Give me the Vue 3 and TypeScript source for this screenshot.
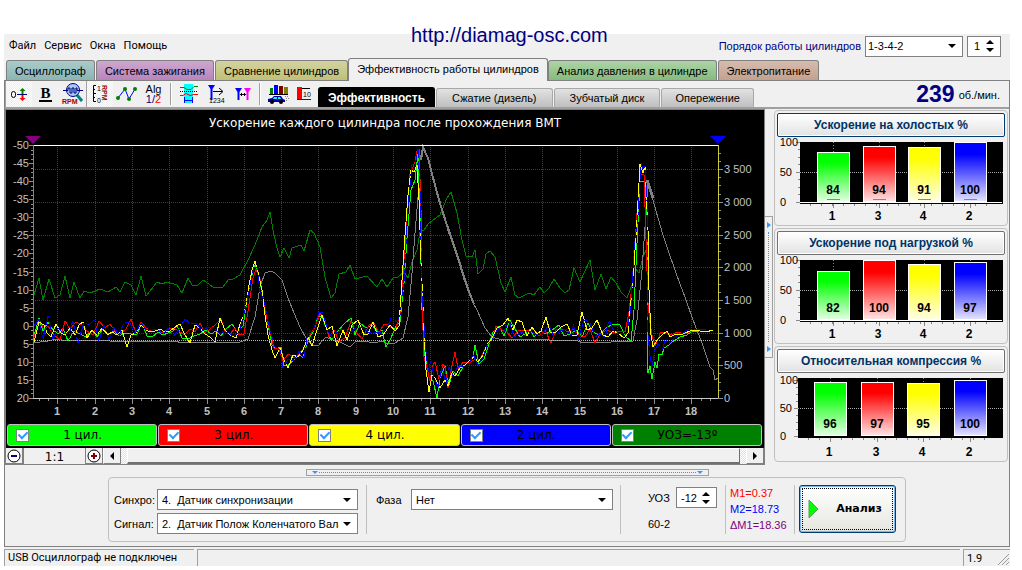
<script setup lang="ts">
import { ref } from 'vue'

interface Tab { label: string; tone: string }
interface Trace { name: string; color: string; width: number; dash?: string; points: string }
interface Legend { label: string; color: string }
interface Bar { cyl: string; value: number; color: string; x: number }
interface BarPanel { title: string; focus: boolean; left: number; top: number; height: number; labelY: number; bars: Bar[] }

const tabs: Tab[] = [
  { label: 'Осциллограф', tone: 'teal' },
  { label: 'Система зажигания', tone: 'violet' },
  { label: 'Сравнение цилиндров', tone: 'olive' },
  { label: 'Эффективность работы цилиндров', tone: 'plain' },
  { label: 'Анализ давления в цилиндре', tone: 'green' },
  { label: 'Электропитание', tone: 'brown' },
]
const activeTab = ref(3)
const subTabs = ['Эффективность', 'Сжатие (дизель)', 'Зубчатый диск', 'Опережение']
const activeSub = ref(0)

const order = ref('1-3-4-2')
const orderIndex = ref(1)
const sensors = [
  { id: 'sync', label: '4.\u00a0 Датчик синхронизации' },
  { id: 'crank', label: '2.\u00a0 Датчик Полож Коленчатого Вала' },
]
const sync = ref('sync')
const signal = ref('crank')
const phase = ref('Нет')
const advance = ref(-12)

const legend: Legend[] = [
  { label: '1 цил.', color: 'lime' },
  { label: '3 цил.', color: 'red' },
  { label: '4 цил.', color: 'yellow' },
  { label: '2 цил.', color: 'blue' },
  { label: 'УОЗ=-13º', color: 'dark' },
]
const shown = ref(legend.map(() => true))

/* Plot frame */
const L = 33, R = 718, T = 145, B = 398
const xAt = (n: number): number => Math.round(20 + n * 37.3)
const yLeft = (v: number): number => Math.round(T + ((v + 50) * (B - T)) / 70)
const yRight = (v: number): number => Math.round(B - v * 0.0654)
const xTicks = Array.from({ length: 18 }, (_, i) => i + 1)
const xMinor = Array.from({ length: 73 }, (_, i) => (i + 2) / 4).filter((n) => xAt(n) > L && xAt(n) < R)
const leftTicks = Array.from({ length: 15 }, (_, i) => -50 + i * 5)
const leftMinor = Array.from({ length: 56 }, (_, i) => -50 + i * 1.25)
const rightTicks = Array.from({ length: 8 }, (_, i) => i * 500)
const rightMinor = Array.from({ length: 31 }, (_, i) => i * 125)
const thousands = (v: number): string => (v >= 1000 ? `${Math.floor(v / 1000)} ${String(v % 1000).padStart(3, '0')}` : String(v))

const traces: Trace[] = [
  { name: 'advance', color: '#008000', width: 1, points: '34,295 39,278 43,300 49,279 55,298 60,295 65,276 70,298 74,282 80,298 84,291 90,293 100,289 108,292 116,287 120,292 125,282 131,285 136,295 141,276 146,296 157,282 162,284 167,282 177,285 182,293 188,278 192,285 198,285 203,280 213,287 223,287 228,280 233,279 240,275 248,260 255,245 262,227 267,220 270,212 273,230 277,248 280,257 284,248 289,258 292,248 301,245 304,251 310,230 314,233 320,247 325,277 331,298 335,293 339,274 346,272 350,265 355,279 367,276 377,287 382,279 387,287 393,278 398,277 404,272 408,278 412,262 417,250 420,232 424,230 428,224 440,215 447,198 451,192 457,213 462,240 466,256 472,257 475,250 478,274 483,269 486,254 490,251 495,257 501,283 505,292 511,277 515,295 519,298 529,293 534,295 540,287 544,293 549,288 554,279 560,288 565,293 569,290 574,268 580,282 590,260 595,290 601,274 606,289 611,277 616,283 621,292 627,298 632,285 634,267 639,273 643,257 647,248' },
  { name: 'rpm', color: '#808080', width: 1, points: '34,342 40,342 44,341 48,341 56,339 62,340 68,341 76,340 86,341 95,340 110,341 130,341 150,342 160,341 168,342 175,341 182,343 190,342 197,343 205,342 212,343 220,342 228,343 240,342 248,339 255,317 260,287 265,273 271,271 275,273 282,280 288,298 294,313 300,327 307,340 313,345 318,346 322,341 326,337 333,340 340,342 350,347 355,342 365,341 373,343 383,341 388,344 395,343 403,338 408,317 412,273 415,233 418,197 420,160 423,146 428,157 440,203 457,253 473,303 477,310 485,328 492,337 502,340 513,339 525,340 538,339 550,340 560,341 570,340 578,341 583,343 595,342 607,343 615,341 625,342 633,341 637,320 642,270 645,227 648,183' },
  { name: 'rpm-fall', color: '#808080', width: 2, points: '421,160 423,147 425,152 428,158 431,170 435,185 439,200 444,216 449,232 454,246 459,261 464,278 469,292 474,304' },
  { name: 'rpm-end', color: '#808080', width: 1, points: '648,182 653,200 658,218 663,235 669,253 675,270 680,284 685,297 693,320 702,343 706,355 710,367 713,370 715,380 718,378' },
  { name: 'rpm-start', color: '#808080', width: 3, points: '647,180 650,189 653,198' },
  { name: 'cyl1', color: '#00ff00', width: 1, points: '34,336 39,318 43,331 48,322 53,330 58,334 63,328 68,341 74,331 80,334 86,337 92,330 97,337 103,329 108,334 114,331 119,336 125,333 131,334 137,334 142,323 147,336 152,337 158,332 163,335 168,333 173,331 177,325 182,338 188,339 194,336 200,334 206,330 211,334 216,331 221,336 226,329 232,324 237,332 243,326 247,301 251,278 255,265 259,276 262,292 265,308 268,325 272,345 275,349 281,347 284,366 288,365 294,360 299,354 303,358 308,340 313,332 318,317 322,316 327,330 331,340 337,332 344,324 351,318 355,335 360,323 366,328 372,325 378,332 382,330 386,347 391,338 396,326 400,322 404,283 407,238 411,190 415,180 418,154 420,216 422,310 425,356 429,377 433,381 437,398 440,378 445,366 449,385 453,371 458,376 463,367 468,362 473,358 475,345 479,364 484,359 488,347 493,332 499,326 504,336 510,320 515,329 520,337 525,334 530,329 534,337 540,331 546,334 552,330 559,325 564,336 570,334 576,330 582,337 588,323 593,332 599,335 606,328 613,324 620,325 626,337 631,341 634,310 637,243 640,181 645,181 647,215 648,373 650,366 652,379 655,362 657,368 659,354 662,355 664,348 669,345 672,342 680,337 687,335 692,331 699,331' },
  { name: 'cyl3', color: '#ff0000', width: 1, points: '34,337 40,321 44,330 48,326 54,335 60,340 65,321 70,329 76,322 82,325 87,331 93,335 99,321 105,328 110,324 115,331 120,334 126,329 131,319 136,333 141,322 146,328 152,332 158,330 163,333 168,329 173,328 179,331 184,335 190,329 195,332 200,323 205,333 210,329 215,325 221,319 225,331 230,334 235,328 239,335 244,334 248,311 253,278 256,269 260,279 264,303 268,324 274,348 279,349 283,361 288,354 295,358 300,353 305,346 310,335 315,327 320,313 325,320 329,337 334,330 339,341 345,338 351,321 356,332 362,339 369,325 374,323 379,333 384,324 389,325 395,331 400,315 403,274 407,216 410,174 415,162 417,151 419,149 421,208 422,303 424,357 427,368 430,381 433,365 435,362 439,379 443,364 445,367 448,388 452,366 455,352 458,369 463,362 469,363 474,360 480,359 484,351 488,344 493,339 496,326 502,330 507,332 512,338 519,330 527,331 533,329 539,336 545,330 551,343 556,330 563,329 568,332 574,329 579,335 585,337 590,329 595,343 601,333 607,330 613,333 619,331 625,332 629,312 633,276 637,213 640,175 644,174 646,239 648,303 650,323 652,335 655,346 658,339 661,332 666,332 671,335 677,332 685,334 692,331' },
  { name: 'cyl4', color: '#ffff00', width: 1, points: '34,342 39,322 44,325 47,333 51,337 56,324 61,333 65,335 70,328 75,335 79,325 83,322 87,338 92,330 97,335 102,328 108,335 112,332 117,335 122,330 127,347 131,335 136,333 141,325 146,330 150,332 155,331 160,329 165,332 170,331 175,327 180,324 185,335 190,343 195,325 200,328 205,334 210,337 215,342 220,318 225,330 230,335 236,338 240,324 243,317 246,305 249,285 252,270 255,261 258,272 262,290 265,315 268,335 272,350 275,358 280,348 284,360 288,368 293,355 298,357 303,350 308,337 312,346 317,330 322,315 327,330 332,326 337,346 343,330 347,340 352,325 358,320 364,335 368,334 373,322 378,337 383,335 390,325 395,331 399,326 402,280 405,235 408,195 411,170 414,172 417,165 419,200 421,260 424,330 426,370 429,392 432,375 435,378 440,388 445,380 448,386 452,372 455,376 460,368 465,365 470,360 474,357 478,362 483,355 487,345 492,338 497,328 503,325 508,318 513,330 517,320 522,322 527,336 532,327 537,334 541,331 546,317 550,332 556,332 561,327 567,324 572,335 577,335 582,312 587,330 592,328 597,320 603,335 608,337 613,331 618,333 624,338 628,333 631,300 634,265 637,220 640,164 643,173 645,166 648,230 649,290 651,335 653,347 657,340 662,335 667,331 670,337 676,334 683,334 692,330 700,331 706,332 713,330' },
  { name: 'cyl2', color: '#0000ff', width: 1, dash: '12 3', points: '34,326 39,319 43,340 48,316 53,339 58,328 63,333 69,334 73,320 78,343 84,322 89,325 94,320 99,341 104,325 109,340 114,327 119,336 124,322 130,323 135,334 141,323 146,330 152,329 158,330 163,335 168,328 174,336 180,328 185,319 191,324 196,323 202,331 208,327 214,328 220,334 226,331 233,336 239,333 242,321 246,306 250,285 254,267 257,267 260,292 264,300 267,316 270,330 275,347 280,350 283,368 288,359 294,361 299,351 304,358 308,332 313,331 319,312 323,313 328,332 333,338 338,329 345,330 351,332 357,327 363,328 368,332 374,333 381,332 387,329 391,318 397,322 400,315 404,282 408,206 412,164 415,166 418,149 420,188 422,291 425,342 428,371 431,361 434,378 438,387 442,367 446,384 449,367 453,375 458,367 464,366 469,365 473,354 478,365 483,357 487,345 492,340 498,328 504,332 509,320 514,337 520,333 526,331 532,332 537,335 543,333 549,325 554,337 560,331 566,329 571,335 573,324 578,340 584,320 590,322 595,337 600,334 605,337 609,320 614,331 620,334 627,333 631,306 634,250 638,215 641,163 643,169 645,166 647,201 648,333 650,356 652,366 655,350 658,344 663,349 665,340 670,343 675,337 681,334 690,329 698,330 707,329' },
]

const makeBars = (values: number[], xs: number[]): Bar[] =>
  values.map((value, i) => ({ value, x: xs[i], cyl: ['1', '3', '4', '2'][i], color: ['lime', 'red', 'yellow', 'blue'][i] }))
const panels: BarPanel[] = [
  { title: 'Ускорение на холостых %', focus: true, left: 23, top: 5, height: 60, labelY: 83, bars: makeBars([84, 94, 91, 100], [40, 86, 131, 177]) },
  { title: 'Ускорение под нагрузкой %', focus: false, left: 23, top: 5, height: 60, labelY: 83, bars: makeBars([82, 100, 94, 97], [40, 86, 131, 177]) },
  { title: 'Относительная компрессия %', focus: false, left: 21, top: 7, height: 56, labelY: 83, bars: makeBars([96, 97, 95, 100], [37, 84, 130, 177]) },
]
const gradients = [
  { id: 'lime', from: '#00ff00', to: '#e4ffe4' },
  { id: 'red', from: '#ff0000', to: '#ffe4e4' },
  { id: 'yellow', from: '#ffff00', to: '#ffffe4' },
  { id: 'blue', from: '#0000ff', to: '#e4e4ff' },
]
</script>

<template>
  <div class="app">
    <a class="site" href="http://diamag-osc.com">http://diamag-osc.com</a>

    <header class="header">
      <nav class="menu">
        <button type="button">Файл</button>
        <button type="button">Сервис</button>
        <button type="button">Окна</button>
        <button type="button">Помощь</button>
      </nav>
      <div class="order">
        <label class="order-label" for="order">Порядок работы цилиндров</label>
        <div class="drop order-drop">
          <select id="order" v-model="order"><option>1-3-4-2</option><option>1-2-4-3</option></select>
          <svg width="8" height="4" viewBox="0 0 8 4"><path d="M0 0h8L4 4z" /></svg>
        </div>
        <div class="spin">
          <input v-model="orderIndex" type="text" inputmode="numeric" aria-label="Номер цилиндра">
          <div class="spin-keys">
            <button type="button" aria-label="Больше" @click="orderIndex++"><svg width="8" height="4" viewBox="0 0 8 4"><path d="M0 4h8L4 0z" /></svg></button>
            <button type="button" aria-label="Меньше" @click="orderIndex--"><svg width="8" height="4" viewBox="0 0 8 4"><path d="M0 0h8L4 4z" /></svg></button>
          </div>
        </div>
      </div>
    </header>

    <nav class="tabs">
      <button v-for="(tab, i) in tabs" :key="tab.label" type="button" class="tab" :class="[tab.tone, { active: i === activeTab }]" @click="activeTab = i">{{ tab.label }}</button>
    </nav>

    <main class="frame">
      <div class="toolbar">
        <div class="tools">
          <button type="button" class="tool pressed" aria-label="Смещение нуля">
            <svg viewBox="0 0 24 24"><rect x="4.500" y="9.500" width="4" height="6" rx="2" fill="none" stroke="#000" /><path d="M10 12.500h10" stroke="#000080" /><path d="M15.500 6l3 3h-2v3h-2V9h-2z" fill="#008000" /><path d="M15.500 19l3-3h-2v-3h-2v3h-2z" fill="#f00" /></svg>
          </button>
          <button type="button" class="tool" aria-label="Жирная линия">
            <span class="bold-b">B</span>
          </button>
          <button type="button" class="tool" aria-label="Обороты">
            <svg viewBox="0 0 24 24"><path d="M16 13l5 6" stroke="#008080" stroke-width="3" /><circle cx="12" cy="8" r="6.500" fill="#a6caf0" stroke="#000080" /><path d="M2 8.500h5V6h2v5h2V6h2v5h2V6h1v2.500h6" fill="none" stroke="#000080" /><text x="1" y="22" class="rpm-mark">RPM</text></svg>
          </button>
          <button type="button" class="tool pressed" aria-label="Шкала оборотов">
            <svg viewBox="0 0 24 24"><path d="M8 3.500H5.500v16H8M5 11.500h3M5 7.500h2M5 15.500h2" fill="none" stroke="#000" /><text x="9" y="9" class="tiny">1</text><text x="9" y="21" class="tiny">0</text><text transform="translate(14 3) rotate(90)" class="rpm-mark">RPM</text></svg>
          </button>
          <button type="button" class="tool" aria-label="График">
            <svg viewBox="0 0 24 24"><path d="M3 16L10 7l4 10 6-10" fill="none" stroke="#00f" /><g fill="#008000"><circle cx="3" cy="16" r="2" /><circle cx="10" cy="7" r="2" /><circle cx="14" cy="17" r="2" /><circle cx="20" cy="7" r="2" /></g></svg>
          </button>
          <button type="button" class="tool" aria-label="Алгоритм 1/2">
            <span class="alg">Alg<br><i>1/</i><em>2</em></span>
          </button>
          <span class="sep"></span>
          <button type="button" class="tool" aria-label="Фаза сигнала">
            <svg viewBox="0 0 24 24"><path d="M7 2h9v19H7z" fill="#0ff" /><path d="M3 5.500h4l3 2h4l3-3h4" fill="none" stroke="#008000" /><path d="M3 13.500h3l3-2 4 2 4-1h4" fill="none" stroke="#f00" /><path d="M3 9.500h18" stroke="#000" stroke-dasharray="1 1" /><path d="M7.500 15v6m8-6v6M8 18.500h7" stroke="#00f" fill="none" /></svg>
          </button>
          <button type="button" class="tool" aria-label="Нумерация меток">
            <svg viewBox="0 0 24 24"><path d="M4 3h7L8.500 7v11h-2V7z" fill="#00f" /><path d="M9 9.500h9" stroke="#000" /><path d="M15 6l4 3.500-4 3.500" fill="none" stroke="#000" /><text x="5" y="21" class="tiny">1234</text></svg>
          </button>
          <button type="button" class="tool" aria-label="Интервал меток">
            <svg viewBox="0 0 24 24"><path d="M4 6h7L8.500 10v8h-2v-8z" fill="#00f" /><path d="M13 6h7l-2.500 4v8h-2v-8z" fill="#f0f" /><path d="M9 12.500h6M10.500 11v3m3-3v3" stroke="#000" /></svg>
          </button>
          <span class="sep"></span>
          <button type="button" class="tool" aria-label="Тест автомобиля">
            <svg viewBox="0 0 24 24"><path d="M4 6h3v6H4z" fill="#008000" /><path d="M8 3h4v9H8z" fill="#00f" /><path d="M13 4h4v8h-4z" fill="#800000" /><path d="M18 5h4v7h-4z" fill="#808000" /><path d="M3 12.500h19" stroke="#000" /><path d="M2 17l4-1 2-2h7l2 3 2 1v2H2z" fill="#00a" /><path d="M8 15h3v2H7zM12 15h2l1 2h-3z" fill="#0ff" /><circle cx="6" cy="20" r="2" /><circle cx="15" cy="20" r="2" /><path d="M19 14.500h3m-2 2h3m-3 2h2" stroke="#888" stroke-dasharray="1 1" /></svg>
          </button>
          <button type="button" class="tool" aria-label="Уровень 10">
            <svg viewBox="0 0 24 24"><path d="M4 5h5v12H4z" fill="#f00" /><path d="M9 6.500h8" stroke="#000" /><path d="M4 17.500h14" stroke="#800000" /><text x="10" y="15" class="tiny">10</text></svg>
          </button>
        </div>
        <nav class="subtabs">
          <button v-for="(name, i) in subTabs" :key="name" type="button" class="subtab" :class="{ active: i === activeSub }" @click="activeSub = i">{{ name }}</button>
        </nav>
        <p class="rpm"><strong>239</strong> <span>об./мин.</span></p>
      </div>

      <div class="work">
        <section class="scope">
          <svg class="plot" viewBox="6 110 758 313">
            <text x="385" y="127" class="plot-title">Ускорение каждого цилиндра после прохождения ВМТ</text>
            <g shape-rendering="crispEdges" fill="none">
              <g stroke="#44440c" stroke-dasharray="1 1">
                <path v-for="n in xTicks" :key="'gx' + n" :d="`M${xAt(n)}.5 ${T}V${B}`" />
                <path v-for="v in rightTicks.slice(1)" :key="'gy' + v" :d="`M${L} ${yRight(v)}.5H${R}`" />
              </g>
              <g stroke="#909090">
                <path v-for="n in xMinor" :key="'mx' + n" :d="`M${xAt(n)}.5 ${B}v${Number.isInteger(n) ? 6 : 3}`" />
                <path v-for="v in leftTicks" :key="'tl' + v" :d="`M29 ${yLeft(v)}.5h4`" />
                <path v-for="v in leftMinor" :key="'ml' + v" :d="`M31 ${yLeft(v)}.5h2`" />
                <path v-for="v in rightTicks" :key="'tr' + v" :d="`M${R} ${yRight(v)}.5h5`" />
                <path v-for="v in rightMinor" :key="'mr' + v" :d="`M${R} ${yRight(v)}.5h3`" />
              </g>
              <polyline v-for="t in traces" :key="t.name" :points="t.points" :stroke="t.color" :stroke-width="t.width" :stroke-dasharray="t.dash" />
              <path :d="`M${L} 340.500H${R}`" stroke="#00ffff" stroke-dasharray="1 1" />
              <path :d="`M${L} ${T}.500H${R}`" stroke="#fff" />
              <path :d="`M${L} ${B}.500H${R}`" stroke="#c8c8c8" />
              <path :d="`M${L}.500 ${T}V${B}`" stroke="#3cb43c" />
              <path :d="`M${R}.500 ${T}V${B}`" stroke="#c8c83c" />
            </g>
            <path d="M25 136h16l-8 8z" fill="#800080" />
            <path d="M710 136h16l-8 8z" fill="#0000ff" />
            <g class="axis end"><text v-for="v in leftTicks" :key="v" x="29" :y="yLeft(v) + 4">{{ v }}</text></g>
            <g class="axis"><text v-for="v in rightTicks" :key="v" x="724" :y="yRight(v) + 4">{{ thousands(v) }}</text></g>
            <g class="axis strong"><text v-for="n in xTicks" :key="n" :x="xAt(n)" y="415">{{ n }}</text></g>
          </svg>

          <div class="legend">
            <label v-for="(item, i) in legend" :key="item.label" class="chip" :class="item.color">
              <input v-model="shown[i]" type="checkbox">
              <span>{{ item.label }}</span>
            </label>
          </div>

          <div class="zoombar">
            <button type="button" aria-label="Уменьшить"><svg width="14" height="14" viewBox="0 0 14 14"><circle cx="7" cy="7" r="6" fill="#fff" stroke="#000" /><path d="M4 7h6" stroke="#000080" stroke-width="2" /></svg></button>
            <output class="ratio">1:1</output>
            <button type="button" aria-label="Увеличить"><svg width="14" height="14" viewBox="0 0 14 14"><circle cx="7" cy="7" r="6" fill="#fff" stroke="#000" /><path d="M4 7h6M7 4v6" stroke="#800000" stroke-width="2" /></svg></button>
            <button type="button" class="arrow" aria-label="Влево"><svg width="4" height="8" viewBox="0 0 4 8"><path d="M4 0v8L0 4z" /></svg></button>
            <div class="track"><div class="thumb"></div></div>
            <button type="button" class="arrow" aria-label="Вправо"><svg width="4" height="8" viewBox="0 0 4 8"><path d="M0 0v8l4-4z" /></svg></button>
          </div>
        </section>

        <div class="vsplit">
          <svg width="4" height="6" viewBox="0 0 4 6"><path d="M0 0l4 3-4 3z" /></svg>
          <i></i>
          <svg width="4" height="6" viewBox="0 0 4 6"><path d="M0 0l4 3-4 3z" /></svg>
        </div>

        <aside class="side">
          <svg class="defs" width="0" height="0">
            <linearGradient v-for="g in gradients" :id="'fill-' + g.id" :key="g.id" x1="0" y1="0" x2="0" y2="1"><stop offset="0.200" :stop-color="g.from" /><stop offset="1" :stop-color="g.to" /></linearGradient>
          </svg>
          <section v-for="p in panels" :key="p.title" class="card">
            <button type="button" class="card-title" :class="{ focus: p.focus }">{{ p.title }}</button>
            <svg class="bars" viewBox="0 0 228 86">
              <g shape-rendering="crispEdges">
                <rect :x="p.left" y="5" :width="226 - p.left" :height="p.top + p.height - 3" fill="#000" />
                <path :d="`M${p.left} ${p.top + p.height / 2}.5H226`" stroke="#aaa" stroke-dasharray="1 1" />
                <path v-for="n in 9" :key="n" :d="`M${p.left - 2} ${p.top + (n - 1) * p.height / 8}h2`" stroke="#888" />
                <path v-for="n in 3" :key="'t' + n" :d="`M${p.left - 4} ${p.top + (n - 1) * p.height / 2}.5h4`" stroke="#888" />
                <path v-for="n in 17" :key="'b' + n" :d="`M${p.left - 1 + n * 11}.5 ${p.top + p.height + 2}v2`" stroke="#888" />
                <g v-for="b in p.bars" :key="b.cyl">
                  <path :d="`M${b.x + 16}.5 5V${p.top + p.height}`" stroke="#888" stroke-dasharray="1 2" />
                  <rect :x="b.x + 0.5" :y="p.top + Math.round(p.height * (1 - b.value / 100)) + 0.5" width="32" :height="Math.round(p.height * b.value / 100) - 1" :fill="`url(#fill-${b.color})`" stroke="#fff" />
                  <path v-if="p.focus" :d="`M${b.x + 10} ${p.top + p.height - 3}.5h13`" stroke="#888" />
                  <path :d="`M${b.x + 16}.5 ${p.top + p.height + 2}v4`" stroke="#888" />
                </g>
                <path :d="`M${p.left} ${p.top + p.height}.5H225`" :stroke="p.left === 23 ? '#fff' : '#000'" />
              </g>
              <g class="scale">
                <text x="21" :y="p.top + 4">100</text>
                <text x="15" :y="p.top + p.height / 2 + 4">50</text>
                <text x="9" :y="p.top + p.height + 4">0</text>
              </g>
              <g v-for="b in p.bars" :key="'l' + b.cyl">
                <text class="value" :x="b.x + 16" :y="p.top + p.height - 8">{{ b.value }}</text>
                <text class="cyl" :x="b.x + 15" :y="p.labelY">{{ b.cyl }}</text>
              </g>
            </svg>
          </section>
        </aside>
      </div>

      <div class="hsplit">
        <svg width="8" height="4" viewBox="0 0 8 4"><path d="M1 0h6L4 3z" /></svg>
        <i></i>
        <svg width="8" height="4" viewBox="0 0 8 4"><path d="M1 0h6L4 3z" /></svg>
      </div>

      <form class="controls" @submit.prevent>
        <div class="sources">
          <label for="sync">Синхро:</label>
          <div class="drop">
            <select id="sync" v-model="sync"><option v-for="s in sensors" :key="s.id" :value="s.id">{{ s.label }}</option></select>
            <svg width="8" height="4" viewBox="0 0 8 4"><path d="M0 0h8L4 4z" /></svg>
          </div>
          <label for="signal">Сигнал:</label>
          <div class="drop">
            <select id="signal" v-model="signal"><option v-for="s in sensors" :key="s.id" :value="s.id">{{ s.label }}</option></select>
            <svg width="8" height="4" viewBox="0 0 8 4"><path d="M0 0h8L4 4z" /></svg>
          </div>
        </div>
        <div class="phase">
          <label for="phase">Фаза</label>
          <div class="drop">
            <select id="phase" v-model="phase"><option>Нет</option></select>
            <svg width="8" height="4" viewBox="0 0 8 4"><path d="M0 0h8L4 4z" /></svg>
          </div>
        </div>
        <div class="advance">
          <label for="advance">УОЗ</label>
          <div class="spin">
            <input id="advance" v-model="advance" type="text" inputmode="numeric">
            <div class="spin-keys">
              <button type="button" aria-label="Увеличить угол" @click="advance++"><svg width="8" height="4" viewBox="0 0 8 4"><path d="M0 4h8L4 0z" /></svg></button>
              <button type="button" aria-label="Уменьшить угол" @click="advance--"><svg width="8" height="4" viewBox="0 0 8 4"><path d="M0 0h8L4 4z" /></svg></button>
            </div>
          </div>
          <span class="wheel">60-2</span>
        </div>
        <div class="marks">
          <span class="m1">M1=0.37</span>
          <span class="m2">M2=18.73</span>
          <span class="dm">ΔM1=18.36</span>
        </div>
        <div class="run">
          <button type="submit" class="analyse">
            <svg width="11" height="20" viewBox="0 0 11 20"><path d="M1 1l9 9-9 9z" fill="#00ff00" stroke="#5aa05a" /></svg>
            <span>Анализ</span>
          </button>
        </div>
      </form>
    </main>

    <footer class="status">
      <span class="state">USB Осциллограф не подключен</span>
      <span class="blank"></span>
      <span class="version">1.9<svg width="14" height="14" viewBox="0 0 14 14"><path d="M2 13L13 2M6 13l7-7M10 13l3-3" stroke="#999" fill="none" /></svg></span>
    </footer>
  </div>
</template>

<style>
body { margin: 0; background: #fff; }
</style>

<style scoped>
* { box-sizing: border-box; }
.app {
  --tahoma: Roboto, "Open Sans", sans-serif;
  --sans: "Liberation Sans", Arial, sans-serif;
  --verdana: "DejaVu Sans", Verdana, sans-serif;
  position: relative;
  display: flex;
  flex-direction: column;
  padding: 34px 12px 4px 4px;
  background: linear-gradient(#f0f0f0, #f0f0f0) no-repeat content-box #fff;
  font: 11px/14px var(--sans);
  color: #000;
}
button, select, input { font: inherit; color: inherit; margin: 0; padding: 0; border: 0; border-radius: 0; background: none; }
p { margin: 0; }
.site { position: absolute; left: 411px; top: 24px; font: 20px/23px var(--sans); color: #000080; text-decoration: none; }

.header { display: flex; justify-content: space-between; align-items: center; height: 24px; padding: 0 9px 0 5px; }
.menu { display: flex; gap: 8px; font: 11px/14px var(--tahoma); }
.order { display: flex; align-items: center; gap: 4px; }
.order-label { color: #000080; }
.drop { display: grid; align-items: center; height: 21px; background: #fff; border: 1px solid #808080; }
.drop select { grid-area: 1 / 1; width: 100%; height: 19px; padding: 0 18px 0 4px; appearance: none; }
.drop svg { grid-area: 1 / 1; justify-self: end; margin-right: 6px; pointer-events: none; }
.order-drop { width: 98px; }
.order-drop select { padding-left: 2px; }
.spin { display: flex; align-items: center; width: 34px; height: 21px; background: #fff; border: 1px solid #808080; }
.spin input { flex: 1; min-width: 0; padding-left: 6px; outline: 0; }
.spin-keys { display: flex; flex-direction: column; gap: 4px; width: 14px; }
.spin-keys button { display: flex; height: 4px; }

.tabs { display: flex; align-items: flex-end; height: 22px; padding-left: 2px; gap: 1px; }
.tab { height: 20px; padding: 0 8px; border: 1px solid #808080; border-bottom: 0; border-radius: 3px 3px 0 0; white-space: nowrap; }
.tab.active { height: 23px; margin: 0 -1px -1px; background: #f0f0f0; z-index: 1; padding-bottom: 2px; }
.teal { background: linear-gradient(#aacccb, #8bb4b2); }
.violet { background: linear-gradient(#cda8cf, #b984bb); }
.olive { background: linear-gradient(#d3d3a2, #c0c078); }
.green { background: linear-gradient(#acd5a6, #86ba7e); }
.brown { background: linear-gradient(#d6bcae, #c4a18f); }

.frame { border: 1px solid #808080; padding-bottom: 4px; }
.toolbar { display: flex; align-items: flex-end; height: 28px; border-bottom: 2px solid #a0a0a0; }
.tools { display: flex; align-items: center; height: 26px; }
.tool { display: grid; place-items: center; width: 27px; height: 26px; }
.tool svg { width: 24px; height: 24px; }
.pressed { background: repeating-conic-gradient(#fff 0 25%, #ececec 0 50%) 0 0 / 2px 2px; border-left: 1px solid #a0a0a0; }
.sep { width: 2px; height: 22px; margin: 0 3px; background: #a0a0a0; border-right: 1px solid #fff; }
.bold-b { width: 13px; font: bold 15px/13px "Liberation Serif", serif; border-bottom: 2px solid #000; }
.rpm-mark { font: bold 7px var(--sans); fill: #a00000; }
.tiny { font: 7px var(--sans); }
.alg { font: 11px/10px var(--sans); }
.alg i, .alg em { font-style: normal; color: #000080; }
.alg em { color: #f00; }
.subtabs { display: flex; align-items: flex-end; gap: 1px; }
.subtab { height: 19px; padding: 0 15px; background: linear-gradient(#e2e2e2, #bfbfbf); border: 1px solid #a8a8a8; border-bottom: 0; border-radius: 3px 3px 0 0; }
.subtab:last-child { padding: 0 13px; }
.subtab.active { height: 20px; padding: 0 9px; background: #000; border-color: #000; color: #fff; font-weight: bold; font-size: 12px; }
.rpm { margin: 0 9px 0 auto; display: flex; align-items: center; gap: 4px; }
.rpm strong { font-size: 23px; line-height: 25px; color: #000080; }

.work { display: flex; }
.scope { flex: 1; min-width: 0; background: #000; border: 1px solid #808080; }
.plot { display: block; width: 100%; }
.plot text { font-family: var(--sans); }
.plot .plot-title { font: 12px var(--verdana); fill: #fff; text-anchor: middle; }
.axis { font-size: 11px; fill: #c0c0c0; }
.axis.end { text-anchor: end; }
.axis.strong { font-weight: bold; text-anchor: middle; }
.legend { display: flex; gap: 1px; padding: 1px 2px 2px 1px; }
.chip { flex: 1; display: flex; align-items: center; height: 22px; padding: 0 8px; border: 1px solid #c0c0c0; border-radius: 3px; font: 12px/20px var(--verdana); }
.chip span { flex: 1; text-align: center; padding-right: 12px; }
.chip input { appearance: none; display: grid; place-items: center; width: 13px; height: 13px; background: #fff; border: 1px solid #808080; }
.chip input:checked::before { content: ""; width: 4px; height: 7px; border: solid #3399ff; border-width: 0 2px 2px 0; transform: rotate(45deg) translate(-1px, -1px); }
.chip.lime { background: #00ff00; }
.chip.red { background: #ff0000; }
.chip.yellow { background: #ffff00; }
.chip.blue { background: #0000ff; }
.chip.dark { background: #008000; }
.zoombar { display: flex; height: 16px; background: #f0f0f0; }
.zoombar button { display: grid; place-items: center; width: 17px; border-right: 1px solid #808080; border-bottom: 1px solid #808080; }
.zoombar .arrow { width: 18px; border-left: 1px solid #fff; }
.ratio { width: 63px; text-align: center; border-right: 1px solid #808080; border-left: 1px solid #808080; font: 12px/18px var(--verdana); }
.track { flex: 1; padding: 0 6px; background: repeating-conic-gradient(#fff 0 25%, #e0e0e0 0 50%) 0 0 / 2px 2px; }
.thumb { height: 16px; background: #f0f0f0; border: 1px solid #707070; border-left-color: #fff; border-top-color: #fff; border-bottom-width: 2px; }

.vsplit { align-self: center; display: flex; flex-direction: column; align-items: center; gap: 4px; width: 8px; height: 142px; padding: 5px 0; border: 1px solid #a0a0a0; border-left: 0; }
.vsplit i { flex: 1; border-left: 1px dotted #3399ff; }
.vsplit svg, .hsplit svg { fill: #3399ff; }
.side { flex: 0 0 236px; display: flex; flex-direction: column; gap: 2px; padding: 1px; }
.defs { position: absolute; }
.card { border: 1px solid #c0c0c0; border-radius: 4px; padding: 2px; }
.card-title { display: block; width: 100%; height: 24px; border: 1px solid #707070; border-radius: 2px; background: linear-gradient(#fff, #e2e2e2); box-shadow: inset 0 0 0 1px #fff; color: #003366; font: bold 12px/20px var(--sans); }
.card-title.focus { border-color: #003c74; }
.bars { display: block; width: 100%; }
.bars text { font-family: var(--sans); }
.scale { font-size: 11px; text-anchor: end; }
.value, .cyl { font-size: 12px; font-weight: bold; text-anchor: middle; }

.hsplit { display: flex; align-items: center; justify-content: space-between; width: 403px; height: 7px; margin: 4px auto 1px 301px; padding: 0 4px; border: 1px solid #a0a0a0; }
.hsplit i { flex: 1; border-top: 1px dotted #3399ff; }

.controls { display: flex; align-items: center; width: fit-content; height: 65px; margin-left: 103px; border: 1px solid #c0c0c0; border-radius: 4px; }
.controls > div { height: 49px; }
.sources { display: grid; grid-template-columns: 43px 201px; row-gap: 3px; align-items: center; align-content: end; width: 258px; padding-left: 5px; border-right: 1px solid #c0c0c0; }
.phase { display: flex; align-items: center; width: 254px; padding: 0 0 20px 9px; border-right: 1px solid #c0c0c0; }
.phase label { width: 35px; }
.phase .drop { width: 202px; height: 21px; }
.advance { display: grid; grid-template-columns: 28px 41px; align-content: space-between; align-items: center; width: 105px; padding: 2px 0 0 27px; border-right: 1px solid #c0c0c0; }
.advance .spin { width: 41px; }
.advance .spin input { padding-left: 4px; }
.wheel { padding-bottom: 3px; }
.marks { display: flex; flex-direction: column; width: 69px; padding-left: 4px; line-height: 16px; border-right: 1px solid #c0c0c0; }
.m1 { color: #f00; }
.m2 { color: #00f; }
.dm { color: #800080; }
.run { display: flex; padding: 0 9px 0 4px; }
.analyse { display: flex; align-items: center; width: 97px; height: 48px; padding-left: 8px; border: 1px solid #003c74; border-radius: 3px; background: linear-gradient(#fff, #e6e6e0); box-shadow: inset 0 0 0 1px #7fb4e8; outline: 1px dotted #000; outline-offset: -4px; font: bold 11px/14px var(--verdana); }
.analyse span { flex: 1; padding-left: 4px; text-align: center; }

.status { display: flex; gap: 3px; margin-top: 2px; font: 11px/15px var(--tahoma); }
.status > span { height: 17px; padding-left: 3px; border: solid #a0a0a0; border-width: 1px 0 0 1px; }
.state { width: 190px; border-right-width: 1px; }
.blank { flex: 1; }
.version { display: flex; justify-content: space-between; align-items: end; width: 47px; }
</style>
